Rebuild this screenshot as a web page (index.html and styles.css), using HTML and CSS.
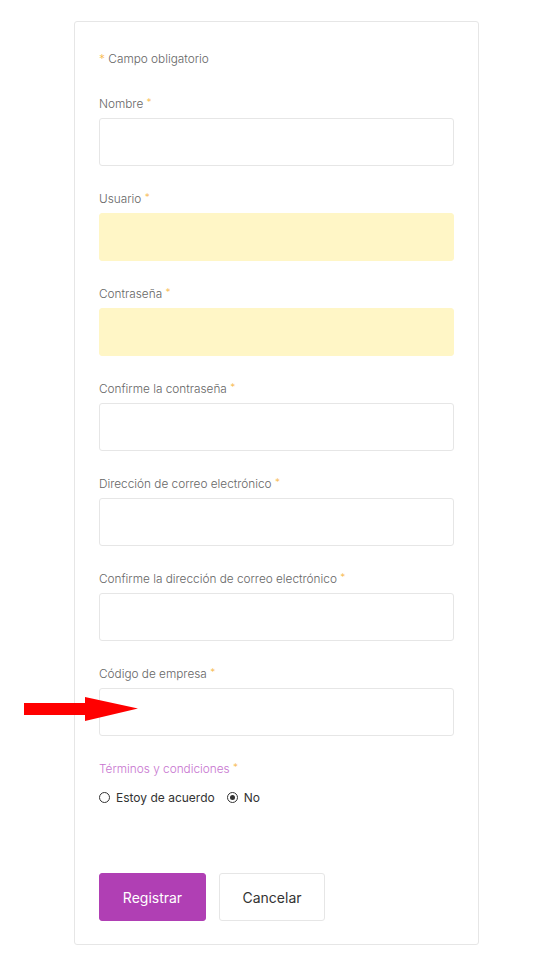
FILE: index.html
```html
<!DOCTYPE html>
<html lang="es">
<head>
<meta charset="utf-8">
<title>Registro</title>
<link rel="stylesheet" href="styles.css">
</head>
<body>
<div class="page">
  <form class="card">
    <p class="note"><span class="req">*</span> Campo obligatorio</p>

    <div class="field">
      <label class="label">Nombre <span class="req">*</span></label>
      <div class="input"></div>
    </div>
    <div class="field">
      <label class="label">Usuario <span class="req">*</span></label>
      <div class="input filled"></div>
    </div>
    <div class="field">
      <label class="label">Contraseña <span class="req">*</span></label>
      <div class="input filled"></div>
    </div>
    <div class="field">
      <label class="label">Confirme la contraseña <span class="req">*</span></label>
      <div class="input"></div>
    </div>
    <div class="field">
      <label class="label">Dirección de correo electrónico <span class="req">*</span></label>
      <div class="input"></div>
    </div>
    <div class="field">
      <label class="label">Confirme la dirección de correo electrónico <span class="req">*</span></label>
      <div class="input"></div>
    </div>
    <div class="field code-field">
      <label class="label">Código de empresa <span class="req">*</span></label>
      <div class="input"></div>
      <svg class="arrow" width="114" height="26" viewBox="0 0 114 26" aria-hidden="true">
        <polygon points="0,6 61,6 61,0 114,11.5 61,24 61,18 0,18" fill="#ff0000"/>
      </svg>
    </div>

    <div class="terms">
      <label class="label terms-label">Términos y condiciones <span class="req">*</span></label>
      <div class="radios">
        <span class="radio"><span class="dot"></span>Estoy de acuerdo</span>
        <span class="radio checked"><span class="dot"></span>No</span>
      </div>
    </div>

    <div class="actions">
      <button type="button" class="btn primary">Registrar</button>
      <button type="button" class="btn secondary">Cancelar</button>
    </div>
  </form>
</div>
</body>
</html>
```

FILE: styles.css
```css
* { box-sizing: border-box; }
html, body { margin: 0; padding: 0; background: #ffffff; }
body {
  font-family: "Inter", "Lato", "Liberation Sans", sans-serif;
  color: #333;
}
.page {
  padding: 21px 0 0 74px;
}
.card {
  width: 405px;
  border: 1px solid #e6e6e6;
  border-radius: 3px;
  padding: 27px 24px 23px 24px;
  display: flex;
  flex-direction: column;
}
.note {
  margin: 0 0 25px 0;
  height: 20px;
  font-size: 11.8px;
  line-height: 20px;
  font-weight: 300;
  color: #666;
}
.req {
  color: #f7b84a;
  font-size: 10px;
  line-height: 1;
  vertical-align: 2px;
}
.note .req { font-size: 12px; vertical-align: 0; }
.field {
  display: flex;
  flex-direction: column;
  margin-bottom: 23px;
  position: relative;
}
.label {
  display: block;
  height: 20px;
  font-size: 11.8px;
  line-height: 20px;
  font-weight: 300;
  color: #666;
  margin-bottom: 4px;
}
.input {
  height: 48px;
  width: 355px;
  border: 1px solid #e6e6e6;
  border-radius: 3px;
  background: #fff;
}
.input.filled {
  background: #fff6c6;
  border-color: #fff6c6;
}
.arrow {
  position: absolute;
  left: -75px;
  top: 33px;
}
.terms { display: flex; flex-direction: column; }
.terms-label { color: #c774cf; margin-bottom: 8px; }
.radios {
  display: flex;
  align-items: center;
  gap: 12px;
  height: 20px;
  font-size: 12px;
  color: #333;
}
.radio { display: flex; align-items: center; gap: 6px; }
.dot {
  width: 11px;
  height: 11px;
  border: 1px solid #333;
  border-radius: 50%;
  display: inline-block;
  position: relative;
}
.radio.checked .dot::after {
  content: "";
  position: absolute;
  left: 2px; top: 2px;
  width: 5px; height: 5px;
  border-radius: 50%;
  background: #333;
}
.actions {
  display: flex;
  gap: 13px;
  margin-top: 66px;
}
.btn {
  height: 48px;
  border-radius: 3px;
  font-family: inherit;
  font-size: 14px;
  cursor: pointer;
}
.btn.primary {
  width: 107px;
  background: #b03fb4;
  border: 1px solid #b03fb4;
  color: #fff;
}
.btn.secondary {
  width: 106px;
  background: #fff;
  border: 1px solid #e6e6e6;
  color: #333;
}
```
